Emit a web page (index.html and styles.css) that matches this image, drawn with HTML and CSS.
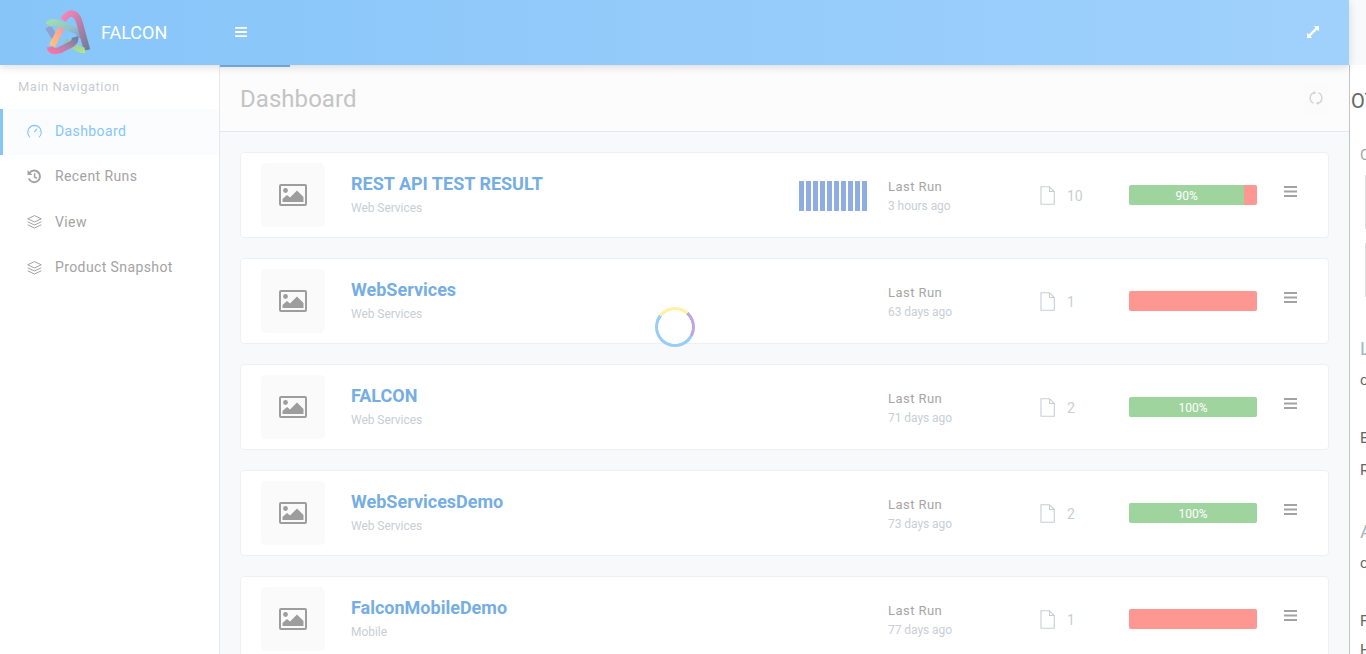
FILE: index.html
```html
<!DOCTYPE html>
<html lang="en">
<head>
<meta charset="utf-8">
<title>Falcon Dashboard</title>
<link rel="stylesheet" href="styles.css">
</head>
<body>
<svg class="sprite" width="0" height="0" aria-hidden="true">
  <defs>
    <symbol id="pic" viewBox="0 0 28 22">
      <rect x="1" y="1" width="26" height="20" rx="1" fill="none" stroke="currentColor" stroke-width="2"/>
      <circle cx="6.5" cy="6.5" r="2.4" fill="currentColor"/>
      <path d="M3.500 18v-3l4.500-4 3 2.500 7-7 6.500 6.500v5z" fill="currentColor"/>
    </symbol>
    <symbol id="doc" viewBox="0 0 15 19">
      <path d="M1 .7h8.500L14.300 5.500V18.300H1z M9.500 .7V5.500H14.300" fill="none" stroke="currentColor" stroke-width="1.100"/>
    </symbol>
    <symbol id="burger" viewBox="0 0 13 11">
      <path d="M0 0h13v2H0zM0 4.500h13v2H0zM0 9h13v2H0z" fill="currentColor"/>
    </symbol>
    <symbol id="layers" viewBox="0 0 15 14">
      <path d="M7.500 .6 14.300 3.800 7.500 7 .7 3.800z M.7 6.800 7.500 10 14.300 6.800 M.7 9.800 7.500 13 14.300 9.800" fill="none" stroke="currentColor" stroke-width="1"/>
    </symbol>
  </defs>
</svg>

<header class="topbar">
  <div class="brand">
    <svg class="logo" width="46" height="46" viewBox="0 0 46 46" aria-hidden="true">
      <defs>
        <linearGradient id="g1" x1="0" y1="0" x2="1" y2="1"><stop offset="0" stop-color="#fb84b6"/><stop offset=".5" stop-color="#b97fa8"/><stop offset="1" stop-color="#6d7f99"/></linearGradient>
        <linearGradient id="g2" x1="0" y1="0" x2="1" y2="1"><stop offset="0" stop-color="#a2dcae"/><stop offset=".55" stop-color="#90c2cd"/><stop offset="1" stop-color="#7f9ecf"/></linearGradient>
        <linearGradient id="g3" x1="0" y1="1" x2="1" y2="0"><stop offset="0" stop-color="#f774a8"/><stop offset=".55" stop-color="#a585ab"/><stop offset="1" stop-color="#6f7fa0"/></linearGradient>
        <linearGradient id="g4" x1="0" y1="1" x2="1" y2="0"><stop offset="0" stop-color="#ffc37a"/><stop offset=".6" stop-color="#fba98f"/><stop offset="1" stop-color="#f884b4"/></linearGradient>
        <linearGradient id="g5" x1="0" y1="0" x2="1" y2="1"><stop offset="0" stop-color="#8fc5b4"/><stop offset="1" stop-color="#aee38c"/></linearGradient>
      </defs>
      <path d="M3 17 12 31" fill="none" stroke="#8aa3cf" stroke-width="6.500"/>
      <path d="M7 36 19 13" fill="none" stroke="url(#g4)" stroke-width="6.500"/>
      <path d="M3 15Q6 11 12 13L32 21Q36 24 35 28" fill="none" stroke="url(#g2)" stroke-width="6.500"/>
      <path d="M18 10Q24 2 28 4 32 5 34 11L42 40" fill="none" stroke="url(#g1)" stroke-width="6.500"/>
      <path d="M20 31 30 37Q36 41 40 40" fill="none" stroke="url(#g5)" stroke-width="6"/>
      <path d="M5 37Q6 43 15 40L27 34Q31 31 30 27" fill="none" stroke="url(#g3)" stroke-width="6.500"/>
    </svg>
    <span class="brand-name">FALCON</span>
  </div>
  <svg class="menu-toggle" width="12" height="10"><use href="#burger"/></svg>
  <svg class="expand" width="12" height="12" viewBox="0 0 14 14" aria-hidden="true">
    <path d="M8 0H14V6L12 4 4 12 6 14H0V8L2 10 10 2z" fill="currentColor"/>
  </svg>
</header>

<div class="shell">
  <aside class="sidebar">
    <div class="nav-title">Main Navigation</div>
    <nav class="nav">
      <a class="nav-item active">
        <svg class="nav-icon" width="15" height="15" viewBox="0 0 15 15" aria-hidden="true"><path d="M3 13.300A6.800 6.800 0 1 1 12 13.300" fill="none" stroke="currentColor" stroke-width="1.100"/><path d="M7.200 8.200 10 4.800" stroke="currentColor" stroke-width="1.200"/><path d="M1.500 7.500h1M12.500 7.500h1M7.500 1.500v1M3.300 3.300l.7.7" stroke="currentColor" stroke-width=".9"/></svg>
        <span>Dashboard</span>
      </a>
      <a class="nav-item">
        <svg class="nav-icon" width="15" height="15" viewBox="0 0 15 15" aria-hidden="true"><path d="M2.600 3.800A5.800 5.800 0 1 1 1.800 9.500" fill="none" stroke="currentColor" stroke-width="2"/><path d="M.5 1 5.400 5.900H.5z" fill="currentColor"/><path d="M7.600 4.300v3.700l2.300 1.400" fill="none" stroke="currentColor" stroke-width="1.500"/></svg>
        <span>Recent Runs</span>
      </a>
      <a class="nav-item">
        <svg class="nav-icon" width="15" height="14"><use href="#layers"/></svg>
        <span>View</span>
      </a>
      <a class="nav-item">
        <svg class="nav-icon" width="15" height="14"><use href="#layers"/></svg>
        <span>Product Snapshot</span>
      </a>
    </nav>
  </aside>

  <main class="main">
    <div class="page-head">
      <h1 class="page-title">Dashboard</h1>
      <div class="refresh">
        <svg width="14" height="16" viewBox="0 0 16 16" aria-hidden="true"><path d="M5.200 14A6.500 6.500 0 0 1 6 1.800M10.800 2A6.500 6.500 0 0 1 10 14.200" fill="none" stroke="currentColor" stroke-width="1.500"/><path d="M5.500 0 8 2 5.500 4zM10.500 12 8 14 10.500 16z" fill="currentColor"/></svg>
      </div>
    </div>

    <div class="cards">
      <article class="card">
        <div class="thumb"><svg width="28" height="22"><use href="#pic"/></svg></div>
        <div class="info"><a class="name">REST API TEST RESULT</a><span class="type">Web Services</span></div>
        <div class="bars"><i></i><i></i><i></i><i></i><i></i><i></i><i></i><i></i><i></i><i></i></div>
        <div class="run"><span class="run-label">Last Run</span><span class="run-ago">3 hours ago</span></div>
        <div class="files"><svg width="15" height="19"><use href="#doc"/></svg><span>10</span></div>
        <div class="progress"><div class="pass" style="width:90%">90%</div><div class="fail"></div></div>
        <svg class="card-menu" width="13" height="11"><use href="#burger"/></svg>
      </article>

      <article class="card">
        <div class="thumb"><svg width="28" height="22"><use href="#pic"/></svg></div>
        <div class="info"><a class="name">WebServices</a><span class="type">Web Services</span></div>
        <div class="run"><span class="run-label">Last Run</span><span class="run-ago">63 days ago</span></div>
        <div class="files"><svg width="15" height="19"><use href="#doc"/></svg><span>1</span></div>
        <div class="progress"><div class="fail"></div></div>
        <svg class="card-menu" width="13" height="11"><use href="#burger"/></svg>
      </article>

      <article class="card">
        <div class="thumb"><svg width="28" height="22"><use href="#pic"/></svg></div>
        <div class="info"><a class="name">FALCON</a><span class="type">Web Services</span></div>
        <div class="run"><span class="run-label">Last Run</span><span class="run-ago">71 days ago</span></div>
        <div class="files"><svg width="15" height="19"><use href="#doc"/></svg><span>2</span></div>
        <div class="progress"><div class="pass" style="width:100%">100%</div></div>
        <svg class="card-menu" width="13" height="11"><use href="#burger"/></svg>
      </article>

      <article class="card">
        <div class="thumb"><svg width="28" height="22"><use href="#pic"/></svg></div>
        <div class="info"><a class="name">WebServicesDemo</a><span class="type">Web Services</span></div>
        <div class="run"><span class="run-label">Last Run</span><span class="run-ago">73 days ago</span></div>
        <div class="files"><svg width="15" height="19"><use href="#doc"/></svg><span>2</span></div>
        <div class="progress"><div class="pass" style="width:100%">100%</div></div>
        <svg class="card-menu" width="13" height="11"><use href="#burger"/></svg>
      </article>

      <article class="card">
        <div class="thumb"><svg width="28" height="22"><use href="#pic"/></svg></div>
        <div class="info"><a class="name">FalconMobileDemo</a><span class="type">Mobile</span></div>
        <div class="run"><span class="run-label">Last Run</span><span class="run-ago">77 days ago</span></div>
        <div class="files"><svg width="15" height="19"><use href="#doc"/></svg><span>1</span></div>
        <div class="progress"><div class="fail"></div></div>
        <svg class="card-menu" width="13" height="11"><use href="#burger"/></svg>
      </article>
    </div>
    <div class="loader"></div>
  </main>

  <section class="overflow-panel">
    <div class="ov-top">OT</div>
    <div class="ov-col">
      <div class="ov-sub">C</div>
      <div class="ov-box"></div>
      <div class="ov-box"></div>
      <div class="ov-head">L</div>
      <div class="ov-lead">c</div>
      <div class="ov-line gap-lg">E</div>
      <div class="ov-line gap-sm">R</div>
      <div class="ov-head">A</div>
      <div class="ov-lead">c</div>
      <div class="ov-line gap-lg">F</div>
      <div class="ov-line gap-xs">H</div>
    </div>
  </section>
</div>
</body>
</html>
```
FILE: styles.css
```css
* { box-sizing: border-box; }
html, body { height: 100%; }
body {
  margin: 0;
  height: 654px;
  overflow: hidden;
  background: #f8f9fb;
  font-family: Roboto, "Liberation Sans", sans-serif;
  color: #a3a3a3;
}
.sprite { position: absolute; }
.topbar {
  position: relative;
  z-index: 3;
  height: 65px;
  width: 1349px;
  display: flex;
  align-items: center;
  background: linear-gradient(90deg, #87c5f9, #a0d1fc);
  box-shadow: 0 2px 8px rgba(0,0,0,.14);
  color: #fff;
}
.brand { width: 220px; display: flex; align-items: center; padding-left: 45px; }
.logo { display: block; margin-right: 10px; }
.brand-name { font-size: 18px; }
.menu-toggle { margin-left: 15px; margin-top: -1px; }
.expand { margin-left: auto; margin-right: 30px; margin-top: -1px; }
.shell { display: flex; height: 589px; }
.sidebar {
  width: 220px;
  flex: none;
  background: #fff;
  border-right: 1px solid #e5e8ed;
}
.nav-title { padding: 14px 0 0 18px; height: 44px; font-size: 13px; letter-spacing: .5px; color: #c9ccd2; }
.nav-item {
  display: flex;
  align-items: center;
  height: 45.500px;
  padding-left: 27px;
  font-size: 14px;
  letter-spacing: .4px;
  color: #a3a3a3;
}
.nav-item span { margin-top: -2px; }
.nav-item.active {
  background: #fbfcfe;
  border-left: 3px solid #87c5f9;
  padding-left: 24px;
  color: #87c5f9;
}
.nav-icon { margin-right: 13px; flex: none; margin-top: -1px; }
.main {
  position: relative;
  width: 1129px;
  flex: none;
  background: #f8f9fb;
  overflow: hidden;
}
.main::before {
  content: "";
  position: absolute;
  left: 0;
  top: 0;
  width: 70px;
  height: 2px;
  background: #7eb3e6;
}
.page-head {
  height: 67px;
  display: flex;
  align-items: center;
  justify-content: space-between;
  padding: 0 20px;
  background: #fcfcfc;
  border-bottom: 1px solid #e3e8f0;
}
.page-title { margin: 2px 0 0; font-size: 24px; font-weight: 400; letter-spacing: .05px; color: #c4c4c4; }
.refresh {
  width: 26px;
  height: 32px;
  display: flex;
  align-items: center;
  justify-content: center;
  background: #fbfbfb;
  color: #d0d0d0;
}
.cards { display: flex; flex-direction: column; gap: 20px; padding: 20px 20px 0; }
.card {
  flex: none;
  height: 86px;
  display: flex;
  align-items: center;
  background: #fff;
  border: 1px solid #eef0f4;
  border-radius: 4px;
  padding-left: 20px;
  position: relative;
}
.thumb {
  width: 64px;
  height: 64px;
  flex: none;
  display: flex;
  align-items: center;
  justify-content: center;
  background: #fafafa;
  border-radius: 5px;
  color: #9d9d9d;
}
.thumb svg { display: block; }
.info { margin-left: 26px; width: 448px; flex: none; display: flex; flex-direction: column; margin-top: -3px; }
.name { font-size: 18px; font-weight: 700; color: #76aee3; line-height: 22px; }
.type { font-size: 12px; letter-spacing: -.05px; color: #c9ced4; line-height: 14px; margin-top: 6px; }
.bars { width: 68px; height: 30px; flex: none; display: flex; justify-content: space-between; margin-right: 21px; margin-top: 1px; }
.bars i { display: block; width: 5px; height: 30px; background: #8fade3; }
.run { display: flex; flex-direction: column; width: 152px; flex: none; margin-top: 1px; }
.info + .run { margin-left: 89px; }
.run-label { font-size: 13px; line-height: 16px; letter-spacing: .45px; color: #a6a6a6; }
.run-ago { font-size: 12px; letter-spacing: -.05px; line-height: 14px; margin-top: 4px; color: #c9ced4; }
.files { width: 89px; flex: none; display: flex; align-items: center; font-size: 14px; color: #c9ced4; margin-top: 1px; }
.files svg { display: block; margin-right: 12px; }
.progress {
  position: absolute;
  left: 888px;
  top: 32px;
  width: 128px;
  height: 20px;
  display: flex;
  border-radius: 2px;
  overflow: hidden;
  box-shadow: 0 0 1px rgba(0,0,0,.18);
}
.pass { background: #9fd49f; color: #fff; font-size: 12px; line-height: 22px; text-align: center; }
.fail { flex: 1; background: #fc9891; }
.card-menu { position: absolute; left: 1043px; top: 33px; color: #a3a3a3; }
.loader {
  position: absolute;
  left: 435px;
  top: 242px;
  width: 40px;
  height: 40px;
  border-radius: 50%;
  background:
    radial-gradient(circle closest-side, #fff 0 83%, transparent 86%),
    conic-gradient(#fff1a0 0 42deg, #bda7e2 42deg 118deg, #98cdf7 118deg 308deg, #fff1a0 308deg 360deg);
}
.overflow-panel {
  flex: 1;
  min-width: 0;
  overflow: hidden;
  background: #fff;
  border-left: 1px solid #c4c4c4;
  color: #666;
  line-height: 20px;
  white-space: nowrap;
}
.ov-top { margin: 26px 0 0 1px; font-size: 20px; }
.ov-col { padding-left: 10px; }
.ov-sub { margin-top: 34px; font-size: 15px; color: #9aa7b0; }
.ov-box { height: 54px; margin-top: 10px; margin-left: 5px; border-left: 1px solid #dcdcdc; }
.ov-box + .ov-box { margin-top: 14px; }
.ov-head { margin-top: 42px; font-size: 19px; color: #a9b5c0; }
.ov-lead { margin-top: 11px; font-size: 15px; }
.ov-line { font-size: 15px; }
.gap-lg { margin-top: 38px; }
.gap-sm { margin-top: 12px; }
.gap-xs { margin-top: 9px; }
```
